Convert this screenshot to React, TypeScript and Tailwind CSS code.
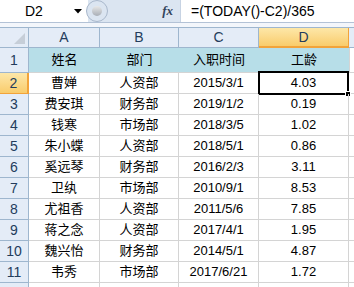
import React from "react";

const rows: [string, string, string, string][] = [
  ["曹婵", "人资部", "2015/3/1", "4.03"],
  ["费安琪", "财务部", "2019/1/2", "0.19"],
  ["钱寒", "市场部", "2018/3/5", "1.02"],
  ["朱小蝶", "人资部", "2018/5/1", "0.86"],
  ["奚远琴", "财务部", "2016/2/3", "3.11"],
  ["卫纨", "市场部", "2010/9/1", "8.53"],
  ["尤祖香", "人资部", "2011/5/6", "7.85"],
  ["蒋之念", "人资部", "2017/4/1", "1.95"],
  ["魏兴怡", "财务部", "2014/5/1", "4.87"],
  ["韦秀", "市场部", "2017/6/21", "1.72"],
];

const widths = ["w-[71px]", "w-[79px]", "w-[80px]", "w-[90px]"];
const font = { fontFamily: '"Liberation Sans", "Noto Sans CJK SC", sans-serif' };

export default function App() {
  return (
    <div className="w-[354px] h-[287px] overflow-hidden bg-white text-[13px] text-black" style={font}>
      {/* formula bar */}
      <div className="flex h-[22px] bg-[#dbe5f1]">
        <div className="w-[88px] bg-white flex items-center relative">
          <span className="ml-[25px] text-[14px] text-black">D2</span>
          <svg className="absolute left-[74px] top-[9px]" width="8" height="5" viewBox="0 0 8 5">
            <path d="M0 0 L8 0 L4 4.5 Z" fill="#000" />
          </svg>
        </div>
        <div className="w-[92px] relative flex items-center">
          <div className="absolute -left-[2px] top-0 w-[22px] h-[22px] rounded-full border border-[#a9b8cc] bg-[#dbe5f1]" />
          <div className="absolute left-[4px] top-[6px] w-[10px] h-[10px] rounded-full bg-gradient-to-b from-[#e8e8e8] to-[#a8aeb6]" />
          <span
            className="ml-auto mr-[7px] text-[13px] italic font-bold text-[#33445c]"
            style={{ fontFamily: '"Liberation Serif", serif' }}
          >
            fx
          </span>
        </div>
        <div className="flex-1 bg-white border-l border-[#c7d3e3] flex items-center">
          <span className="ml-[10px] text-[14px] text-black">=(TODAY()-C2)/365</span>
        </div>
      </div>
      <div className="h-[5px] border-t border-[#b3c2d6] bg-[#f3f6fb]" />

      {/* column header */}
      <div className="flex h-[21px] bg-[#e4ecf7] border-t border-[#9eb6ce] border-b border-[#9eb6ce] text-[14px] text-[#233c5c]">
        <div className="w-[29px] border-r border-[#9eb6ce] relative">
          <svg className="absolute right-[3px] bottom-[3px]" width="11" height="11" viewBox="0 0 11 11">
            <path d="M11 0 L11 11 L0 11 Z" fill="#c6ced8" />
          </svg>
        </div>
        {["A", "B", "C"].map((c, i) => (
          <div key={c} className={`${widths[i]} border-r border-[#9eb6ce] flex items-center justify-center`}>
            {c}
          </div>
        ))}
        <div className="w-[90px] border-r border-[#f2a33a] flex items-center justify-center bg-gradient-to-b from-[#fde7a8] to-[#f9cc6b] border-b-2 border-b-[#f2a33a] -mb-px">
          D
        </div>
        <div className="flex-1" />
      </div>

      {/* row 1 */}
      <div className="flex h-[25px] border-b border-[#d4d4d4]">
        <div className="w-[29px] bg-[#e4ecf7] border-r border-[#9eb6ce] border-b border-b-[#9eb6ce] -mb-px flex items-center justify-center text-[14px] text-[#233c5c]">
          1
        </div>
        <div className="flex bg-[#b7dee8]">
          {["姓名", "部门", "入职时间", "工龄"].map((t, i) => (
            <div key={t} className={`${widths[i]} flex items-center justify-center`}>
              {t}
            </div>
          ))}
        </div>
        <div className="flex-1 border-l border-[#d4d4d4]" />
      </div>

      {rows.map((r, ri) => {
        const selected = ri === 0;
        return (
          <div key={ri} className="flex h-[21px] border-b border-[#d4d4d4]">
            <div
              className={`w-[29px] border-r -mb-px border-b flex items-center justify-center text-[14px] text-[#233c5c] ${
                selected
                  ? "bg-gradient-to-b from-[#fde7a8] to-[#f9cc6b] border-r-[#f2a33a] border-r-2 border-b-[#f2a33a]"
                  : "bg-[#e4ecf7] border-[#9eb6ce]"
              }`}
            >
              {ri + 2}
            </div>
            {r.map((t, ci) => (
              <div
                key={ci}
                className={`${widths[ci]} border-r border-[#d4d4d4] flex items-center justify-center relative`}
              >
                {t}
                {selected && ci === 3 && (
                  <>
                    <div className="absolute -left-[1px] -top-[2px] -right-[1px] -bottom-[2px] border-2 border-black" />
                    <div className="absolute -right-[3px] -bottom-[4px] w-[6px] h-[6px] bg-black border border-white" />
                  </>
                )}
              </div>
            ))}
            <div className="flex-1" />
          </div>
        );
      })}
      <div className="flex h-[10px]">
        <div className="w-[29px] bg-[#e4ecf7] border-r border-[#9eb6ce]" />
        {widths.map((w, i) => (
          <div key={i} className={`${w} border-r border-[#d4d4d4]`} />
        ))}
      </div>
    </div>
  );
}
